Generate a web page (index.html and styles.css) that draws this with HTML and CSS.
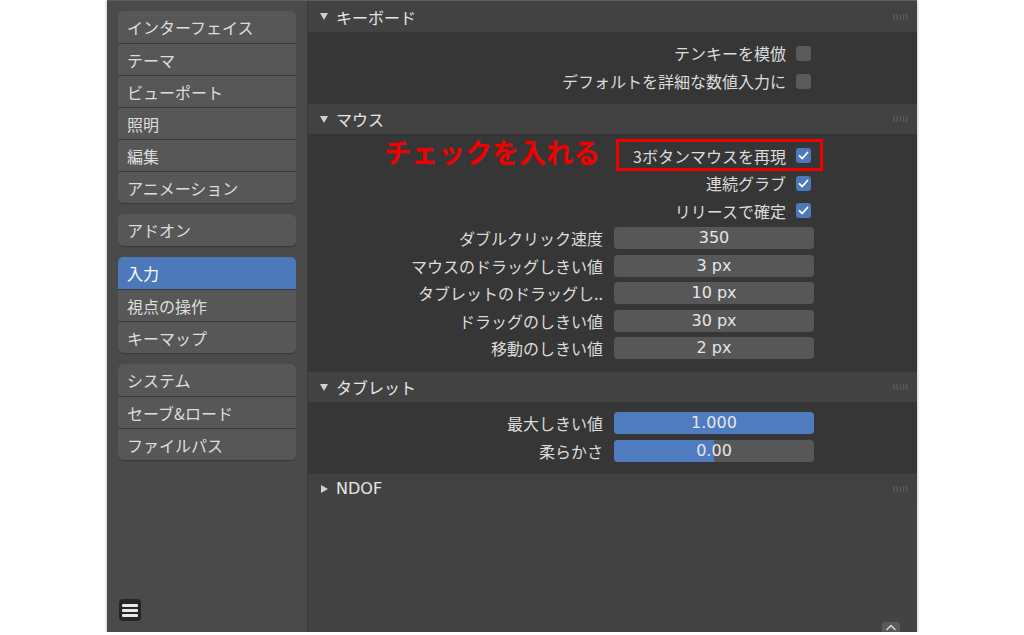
FILE: index.html
```html
<!DOCTYPE html>
<html lang="ja">
<head>
<meta charset="utf-8">
<title>Blender プリファレンス - 入力</title>
<link rel="stylesheet" href="styles.css">
</head>
<body>
<div class="window">
  <nav class="sidebar">
    <div class="group">
      <div class="nav-item">インターフェイス</div>
      <div class="nav-item">テーマ</div>
      <div class="nav-item">ビューポート</div>
      <div class="nav-item">照明</div>
      <div class="nav-item">編集</div>
      <div class="nav-item">アニメーション</div>
    </div>
    <div class="group">
      <div class="nav-item">アドオン</div>
    </div>
    <div class="group">
      <div class="nav-item active">入力</div>
      <div class="nav-item">視点の操作</div>
      <div class="nav-item">キーマップ</div>
    </div>
    <div class="group">
      <div class="nav-item">システム</div>
      <div class="nav-item">セーブ&amp;ロード</div>
      <div class="nav-item">ファイルパス</div>
    </div>
    <div class="spacer"></div>
    <div class="menu-btn">
      <span></span><span></span><span></span>
    </div>
  </nav>

  <main class="main">
    <section class="panel">
      <header class="panel-head first">
        <svg class="tri" width="8" height="7" viewBox="0 0 8 7"><polygon points="0,0 8,0 4,7" fill="#d0d0d0"/></svg>
        <span class="title">キーボード</span>
        <svg class="grip" width="15" height="6" viewBox="0 0 15 6"><g fill="#6a6a6a"><circle cx="1" cy="1" r="0.8"/><circle cx="4.2" cy="1" r="0.8"/><circle cx="7.4" cy="1" r="0.8"/><circle cx="10.6" cy="1" r="0.8"/><circle cx="13.8" cy="1" r="0.8"/><circle cx="1" cy="3" r="0.8"/><circle cx="4.2" cy="3" r="0.8"/><circle cx="7.4" cy="3" r="0.8"/><circle cx="10.6" cy="3" r="0.8"/><circle cx="13.8" cy="3" r="0.8"/><circle cx="1" cy="5" r="0.8"/><circle cx="4.2" cy="5" r="0.8"/><circle cx="7.4" cy="5" r="0.8"/><circle cx="10.6" cy="5" r="0.8"/><circle cx="13.8" cy="5" r="0.8"/></g></svg>
      </header>
      <div class="panel-body body-kb">
        <div class="row check-row"><span class="label">テンキーを模倣</span><span class="check"></span></div>
        <div class="row check-row"><span class="label">デフォルトを詳細な数値入力に</span><span class="check"></span></div>
      </div>
    </section>

    <section class="panel">
      <header class="panel-head">
        <svg class="tri" width="8" height="7" viewBox="0 0 8 7"><polygon points="0,0 8,0 4,7" fill="#d0d0d0"/></svg>
        <span class="title">マウス</span>
        <svg class="grip" width="15" height="6" viewBox="0 0 15 6"><g fill="#6a6a6a"><circle cx="1" cy="1" r="0.8"/><circle cx="4.2" cy="1" r="0.8"/><circle cx="7.4" cy="1" r="0.8"/><circle cx="10.6" cy="1" r="0.8"/><circle cx="13.8" cy="1" r="0.8"/><circle cx="1" cy="3" r="0.8"/><circle cx="4.2" cy="3" r="0.8"/><circle cx="7.4" cy="3" r="0.8"/><circle cx="10.6" cy="3" r="0.8"/><circle cx="13.8" cy="3" r="0.8"/><circle cx="1" cy="5" r="0.8"/><circle cx="4.2" cy="5" r="0.8"/><circle cx="7.4" cy="5" r="0.8"/><circle cx="10.6" cy="5" r="0.8"/><circle cx="13.8" cy="5" r="0.8"/></g></svg>
      </header>
      <div class="panel-body body-mouse">
        <div class="annotation">
          <span class="note">チェックを入れる</span>
          <span class="note-box"></span>
        </div>
        <div class="row check-row"><span class="label">3ボタンマウスを再現</span><span class="check on"><svg width="15" height="15" viewBox="0 0 15 15"><polyline points="3.5,7.8 6.3,10.5 11.5,4.5" fill="none" stroke="#fff" stroke-width="1.8" stroke-linecap="round" stroke-linejoin="round"/></svg></span></div>
        <div class="row check-row"><span class="label">連続グラブ</span><span class="check on"><svg width="15" height="15" viewBox="0 0 15 15"><polyline points="3.5,7.8 6.3,10.5 11.5,4.5" fill="none" stroke="#fff" stroke-width="1.8" stroke-linecap="round" stroke-linejoin="round"/></svg></span></div>
        <div class="row check-row"><span class="label">リリースで確定</span><span class="check on"><svg width="15" height="15" viewBox="0 0 15 15"><polyline points="3.5,7.8 6.3,10.5 11.5,4.5" fill="none" stroke="#fff" stroke-width="1.8" stroke-linecap="round" stroke-linejoin="round"/></svg></span></div>
        <div class="row field-row"><span class="label">ダブルクリック速度</span><span class="field"><span class="value">350</span></span></div>
        <div class="row field-row"><span class="label">マウスのドラッグしきい値</span><span class="field"><span class="value">3 px</span></span></div>
        <div class="row field-row"><span class="label">タブレットのドラッグし..</span><span class="field"><span class="value">10 px</span></span></div>
        <div class="row field-row"><span class="label">ドラッグのしきい値</span><span class="field"><span class="value">30 px</span></span></div>
        <div class="row field-row"><span class="label">移動のしきい値</span><span class="field"><span class="value">2 px</span></span></div>
      </div>
    </section>

    <section class="panel">
      <header class="panel-head">
        <svg class="tri" width="8" height="7" viewBox="0 0 8 7"><polygon points="0,0 8,0 4,7" fill="#d0d0d0"/></svg>
        <span class="title">タブレット</span>
        <svg class="grip" width="15" height="6" viewBox="0 0 15 6"><g fill="#6a6a6a"><circle cx="1" cy="1" r="0.8"/><circle cx="4.2" cy="1" r="0.8"/><circle cx="7.4" cy="1" r="0.8"/><circle cx="10.6" cy="1" r="0.8"/><circle cx="13.8" cy="1" r="0.8"/><circle cx="1" cy="3" r="0.8"/><circle cx="4.2" cy="3" r="0.8"/><circle cx="7.4" cy="3" r="0.8"/><circle cx="10.6" cy="3" r="0.8"/><circle cx="13.8" cy="3" r="0.8"/><circle cx="1" cy="5" r="0.8"/><circle cx="4.2" cy="5" r="0.8"/><circle cx="7.4" cy="5" r="0.8"/><circle cx="10.6" cy="5" r="0.8"/><circle cx="13.8" cy="5" r="0.8"/></g></svg>
      </header>
      <div class="panel-body body-tab">
        <div class="row field-row"><span class="label">最大しきい値</span><span class="field"><span class="fill" style="width: 100%"></span><span class="value">1.000</span></span></div>
        <div class="row field-row"><span class="label">柔らかさ</span><span class="field"><span class="fill" style="width: 50%"></span><span class="value">0.00</span></span></div>
      </div>
    </section>

    <section class="panel">
      <header class="panel-head">
        <svg class="tri" width="8" height="8" viewBox="0 0 8 8"><polygon points="1,0 8,4 1,8" fill="#d0d0d0"/></svg>
        <span class="title latin">NDOF</span>
        <svg class="grip" width="15" height="6" viewBox="0 0 15 6"><g fill="#6a6a6a"><circle cx="1" cy="1" r="0.8"/><circle cx="4.2" cy="1" r="0.8"/><circle cx="7.4" cy="1" r="0.8"/><circle cx="10.6" cy="1" r="0.8"/><circle cx="13.8" cy="1" r="0.8"/><circle cx="1" cy="3" r="0.8"/><circle cx="4.2" cy="3" r="0.8"/><circle cx="7.4" cy="3" r="0.8"/><circle cx="10.6" cy="3" r="0.8"/><circle cx="13.8" cy="3" r="0.8"/><circle cx="1" cy="5" r="0.8"/><circle cx="4.2" cy="5" r="0.8"/><circle cx="7.4" cy="5" r="0.8"/><circle cx="10.6" cy="5" r="0.8"/><circle cx="13.8" cy="5" r="0.8"/></g></svg>
      </header>
    </section>

    <div class="region-toggle">
      <svg width="12" height="8" viewBox="0 0 12 8"><polyline points="2,6.5 6,2.5 10,6.5" fill="none" stroke="#d8d8d8" stroke-width="1.6" stroke-linecap="round" stroke-linejoin="round"/></svg>
    </div>
  </main>
</div>
</body>
</html>
```

FILE: styles.css
```css
* {
  box-sizing: border-box;
}

html, body {
  margin: 0;
  padding: 0;
  background: #ffffff;
}

body {
  font-family: "DejaVu Sans", "Noto Sans CJK JP", sans-serif;
  font-size: 16px;
  color: #e4e4e4;
}

.window {
  margin-left: 107px;
  width: 810px;
  height: 632px;
  display: flex;
  background: #434343;
  border-top: 1px solid #5e5e5e;
  box-shadow: 0 1px 3px rgba(0, 0, 0, 0.35);
  overflow: hidden;
}

/* ---------- sidebar ---------- */
.sidebar {
  width: 201px;
  flex: none;
  display: flex;
  flex-direction: column;
  gap: 11px;
  padding: 10px 11px 11px 11px;
  background: #4a4a4a;
  border-right: 1px solid #3c3c3c;
}

.group {
  display: flex;
  flex-direction: column;
  border-radius: 5px;
  overflow: hidden;
  background: #3a3a3a;
  box-shadow: 0 1px 1px rgba(0, 0, 0, 0.25);
}

.nav-item {
  height: 32px;
  display: flex;
  align-items: center;
  padding-left: 9px;
  background: #575757;
  color: #dedede;
  font-family: "Noto Sans CJK JP", "DejaVu Sans", sans-serif;
  font-size: 16px;
  line-height: 1;
  border-top: 1px solid #3a3a3a;
}

.nav-item:first-child {
  border-top: none;
}

.nav-item.active {
  background: #4d78ba;
  color: #ffffff;
}

.spacer {
  flex: 1;
}

.menu-btn {
  width: 22px;
  height: 22px;
  margin-left: 1px;
  border-radius: 4px;
  background: #262626;
  display: flex;
  flex-direction: column;
  justify-content: center;
  gap: 2px;
  padding: 0 3px;
}

.menu-btn span {
  display: block;
  height: 3px;
  border-radius: 1px;
  background: #e8e8e8;
}

/* ---------- main ---------- */
.main {
  flex: 1;
  position: relative;
  display: flex;
  flex-direction: column;
  background: #434343;
}

.panel-head {
  height: 31px;
  display: flex;
  align-items: center;
  padding-left: 12px;
  padding-right: 9px;
  background: #424242;
  border-top: 1px solid #383838;
}

.panel-head.first {
  border-top: none;
}

.tri {
  flex: none;
  margin-right: 8px;
}

.title {
  font-family: "Noto Sans CJK JP", "DejaVu Sans", sans-serif;
  color: #e6e6e6;
  line-height: 1;
}

.title.latin {
  font-family: "DejaVu Sans", sans-serif;
}

.grip {
  margin-left: auto;
  flex: none;
}

.panel-body {
  position: relative;
  background: #363636;
}

.body-kb {
  height: 71px;
  padding-top: 7px;
}

.body-kb .row {
  height: 28px;
}

.body-mouse {
  height: 237px;
  padding-top: 8px;
}

.body-mouse .row {
  height: 27.5px;
}

.body-tab {
  height: 71px;
  padding-top: 7px;
}

.body-tab .row {
  height: 28px;
}

.row {
  display: flex;
  align-items: center;
}

.label {
  font-family: "Noto Sans CJK JP", "DejaVu Sans", sans-serif;
  color: #dcdcdc;
  line-height: 1;
  white-space: nowrap;
}

.check-row {
  justify-content: flex-end;
  gap: 10px;
  padding-right: 106px;
}

.check {
  width: 15px;
  height: 15px;
  flex: none;
  border-radius: 3px;
  background: #5b5b5b;
  display: flex;
}

.check.on {
  background: #4d78ba;
}

.field-row {
  display: grid;
  grid-template-columns: 1fr 200px;
  column-gap: 11px;
  padding-right: 103px;
}

.field-row .label {
  text-align: right;
}

.field {
  position: relative;
  height: 22px;
  border-radius: 4px;
  overflow: hidden;
  background: #575757;
  display: flex;
  align-items: center;
  justify-content: center;
  font-family: "DejaVu Sans", sans-serif;
  font-size: 16px;
  color: #e6e6e6;
  line-height: 1;
}

.fill {
  position: absolute;
  left: 0;
  top: 0;
  bottom: 0;
  background: #4f7cc0;
}

.value {
  position: relative;
}

/* ---------- annotation overlay ---------- */
.annotation {
  position: absolute;
  left: 0;
  top: 0;
  width: 100%;
  height: 40px;
  pointer-events: none;
}

.note {
  position: absolute;
  left: 76px;
  top: 4px;
  font-family: "Noto Sans CJK JP", sans-serif;
  font-weight: 700;
  font-size: 27px;
  line-height: 1;
  color: #f20000;
  white-space: nowrap;
}

.note-box {
  position: absolute;
  left: 308px;
  top: 5px;
  width: 207px;
  height: 32px;
  border: 3px solid #f20000;
}

/* ---------- region toggle tab ---------- */
.region-toggle {
  position: absolute;
  right: 17px;
  bottom: -4px;
  width: 18px;
  height: 14px;
  border-radius: 3px;
  background: #5a5a5a;
  display: flex;
  justify-content: center;
  padding-top: 1px;
}
```
